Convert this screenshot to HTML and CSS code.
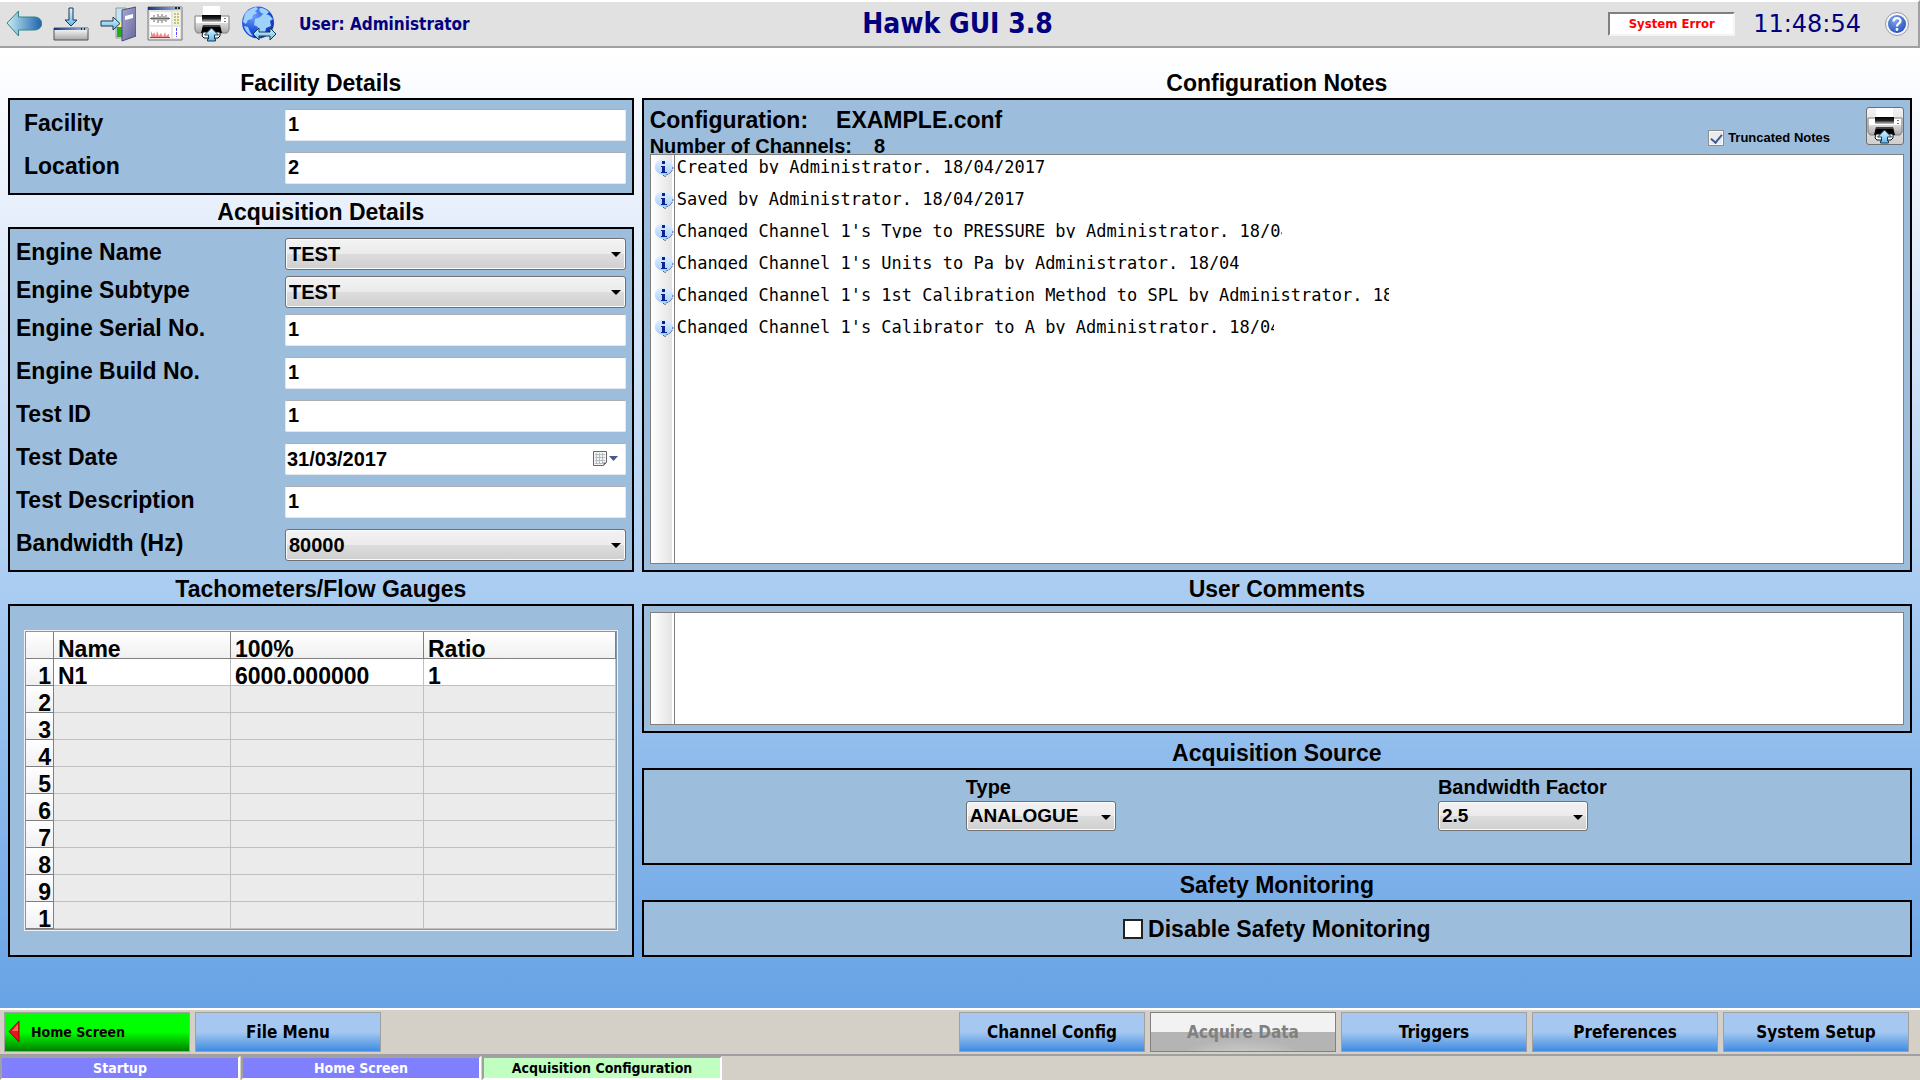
FILE: index.html
```html
<!DOCTYPE html>
<html lang="en">
<head>
    <meta charset="UTF-8">
    <meta name="viewport" content="width=device-width, initial-scale=1.0">
    <title>Hawk GUI 3.8</title>
    <link rel="stylesheet" href="styles.css">
</head>
<body>
    <!-- shared gradients and icons -->
    <svg class="defs" width="0" height="0" aria-hidden="true">
        <defs>
            <linearGradient id="blueArrow" x1="0" y1="0" x2="1" y2="0">
                <stop offset="0" stop-color="#c8ecf4"/><stop offset="1" stop-color="#1c62ae"/>
            </linearGradient>
            <linearGradient id="skyArrow" x1="0" y1="0" x2="0" y2="1">
                <stop offset="0" stop-color="#dff5ff"/><stop offset="1" stop-color="#5fb9ee"/>
            </linearGradient>
            <linearGradient id="metal" x1="0" y1="0" x2="0" y2="1">
                <stop offset="0" stop-color="#ffffff"/><stop offset="1" stop-color="#a8a8a8"/>
            </linearGradient>
            <linearGradient id="slot" x1="0" y1="0" x2="0" y2="1">
                <stop offset="0" stop-color="#000000"/><stop offset="0.5" stop-color="#222222"/><stop offset="1" stop-color="#cccccc"/>
            </linearGradient>
            <linearGradient id="titleBar" x1="0" y1="0" x2="1" y2="0">
                <stop offset="0" stop-color="#16357c"/><stop offset="1" stop-color="#a9c3e6"/>
            </linearGradient>
            <linearGradient id="door" x1="0" y1="0" x2="1" y2="1">
                <stop offset="0" stop-color="#a9a9d4"/><stop offset="1" stop-color="#66669c"/>
            </linearGradient>
            <radialGradient id="ocean" cx="0.35" cy="0.3" r="0.8">
                <stop offset="0" stop-color="#6fa0ff"/><stop offset="0.6" stop-color="#1c4fe0"/><stop offset="1" stop-color="#0a2aa0"/>
            </radialGradient>
            <radialGradient id="helpBall" cx="0.4" cy="0.3" r="0.8">
                <stop offset="0" stop-color="#7fa8f0"/><stop offset="1" stop-color="#1f48b4"/>
            </radialGradient>
            <linearGradient id="bubble" x1="0" y1="0" x2="0" y2="1">
                <stop offset="0" stop-color="#e4f0ff"/><stop offset="1" stop-color="#a0caf8"/>
            </linearGradient>
            <symbol id="printer" viewBox="0 0 36 36">
                <path d="M1 10h34v14l-2 3H3l-2-3z" fill="url(#metal)" stroke="#808080"/>
                <path d="M2 11h32v6H2z" fill="#fff"/>
                <path d="M9 0h17v10H9z" fill="#fff"/>
                <path d="M8 9h19v7H8z" fill="url(#slot)"/>
                <path d="M9 19h17l2 8H7z" fill="#000"/>
                <path d="M9 19h17v2H9z" fill="#444"/>
                <path d="M9 26h17v4l-2 2H10l-2-2z" fill="#fff" stroke="#111"/>
                <path d="M30 12h2v1h-2zM30 15h2v1h-2z" fill="#777"/>
                <path d="M17.500 22l7 7h-4v4h1v2h-8v-2h1v-4h-4z" fill="url(#skyArrow)" stroke="#1c3850"/>
            </symbol>
            <symbol id="info" viewBox="0 0 20 20">
                <path d="M10 1c5 0 9 3 9 8 0 4-3 7-7 8l-2 2-1-2c-5-1-8-4-8-8 0-5 4-8 9-8z" fill="url(#bubble)"/>
                <path d="M19 9c0 4-3 7-7 8l-1 2-2-2" fill="none" stroke="#48689c" stroke-dasharray="2 1"/>
                <path d="M8 3h3v3H8zM7 8h4v6h2v1H7v-1h1V9H7z" fill="#0c2492"/>
            </symbol>
        </defs>
    </svg>

    <header class="topbar">
        <div class="tools">
            <button type="button" class="tool" aria-label="Back">
                <svg width="36" height="36" viewBox="0 0 36 36">
                    <path d="M1 17L12.500 5v6H29c9 1 9 12 0 13H12.500v6z" fill="url(#blueArrow)" stroke="#2a8a80"/>
                </svg>
            </button>
            <button type="button" class="tool" aria-label="Minimise">
                <svg width="36" height="36" viewBox="0 0 36 36">
                    <path d="M16 2h4v12h4l-6 6-6-6h4z" fill="url(#skyArrow)" stroke="#1c3850"/>
                    <path d="M1 22h34v12H1z" fill="url(#metal)" stroke="#555"/>
                    <path d="M1 22h34v2H1z" fill="url(#titleBar)"/>
                    <path d="M28 22h1v2h-1zM31 22h1v2h-1z" fill="#123"/>
                </svg>
            </button>
            <button type="button" class="tool" aria-label="Log in">
                <svg width="36" height="36" viewBox="0 0 36 36">
                    <path d="M16 2h10v30H16z" fill="#bfe6fb" stroke="#9a9a8a"/>
                    <path d="M17 16h6v5h-6z" fill="#fff79c"/>
                    <path d="M17 21h6v10h-6z" fill="#28a81c"/>
                    <path d="M22 4L36 1v29l-14 5z" fill="url(#door)" stroke="#4c4c80"/>
                    <path d="M25 10l8-2v4l-8 2z" fill="#fff"/>
                    <path d="M1 15h12v-4l7 6.500-7 6.500v-4H1z" fill="url(#skyArrow)" stroke="#1c3850"/>
                </svg>
            </button>
            <button type="button" class="tool" aria-label="Data view">
                <svg width="36" height="36" viewBox="0 0 36 36">
                    <path d="M1 1h34v33H1z" fill="#e4e4e4" stroke="#777"/>
                    <path d="M1 1h34v3H1z" fill="url(#titleBar)"/>
                    <path d="M28 1h2v2h-2zM31 1h2v2h-2z" fill="#123"/>
                    <path d="M3 6h21v13H3zM3 21h21v11H3zM26 21h7v11h-7z" fill="#fff"/>
                    <path d="M26 6h7v13h-7z" fill="#f8f6cc"/>
                    <path d="M3 12.500h20M5 11v3M7 9v7M9 11v3M11 8v9M13 10v5M15 8v9M17 10v5M19 9v7M21 11v3" stroke="#666"/>
                    <path d="M4 31v-6l2 4 1-3 2 4 1-5 2 5 2-3 2 4 2-5 1 4 3-2v3z" fill="#e88"/>
                    <path d="M3 31.500h20" stroke="#b33"/>
                    <path d="M27 8h5M27 11h5M27 14h5M27 17h5" stroke="#8c8c50" stroke-dasharray="2 1"/>
                    <path d="M29.500 22v9" stroke="#5a4cff" stroke-dasharray="3 1"/>
                </svg>
            </button>
            <button type="button" class="tool" aria-label="Print">
                <svg width="36" height="36"><use href="#printer"/></svg>
            </button>
            <button type="button" class="tool" aria-label="Network">
                <svg width="36" height="36" viewBox="0 0 36 36">
                    <circle cx="17" cy="16.500" r="16" fill="url(#ocean)"/>
                    <path d="M4 8c3-4 7-6 11-7l2 2-3 2 2 2-4 2-1 4-4 1-2 4-3-2zM19 2c4 0 7 2 9 4l-3 3-5-2-2-3zM14 13l5-2 3-3 6 1 4 4-3 2 1 5-5 2-1 5-5 4-3-6 1-4-4-2zM3 20l4 1 2 5 3 4-3-1c-3-2-5-5-6-9z" fill="#9fd2fa"/>
                    <path d="M12 28l6-6v4h11v-4l6 6-6 6v-4H18v4z" fill="url(#skyArrow)" stroke="#1c3850"/>
                </svg>
            </button>
            <span class="user">User: Administrator</span>
        </div>
        <h1 class="app-title">Hawk GUI 3.8</h1>
        <div class="status">
            <output class="error-box">System Error</output>
            <time class="clock">11:48:54</time>
            <button type="button" class="help" aria-label="Help">
                <svg width="24" height="24" viewBox="0 0 24 24">
                    <circle cx="12" cy="12" r="11.500" fill="#f4f4f8" stroke="#9a9aa8"/>
                    <circle cx="12" cy="12" r="9" fill="url(#helpBall)"/>
                    <path d="M8.500 9.500c0-4.500 7-4.500 7-.5 0 2.500-3.500 2.500-3.500 5.500" fill="none" stroke="#fff" stroke-width="2.200"/>
                    <circle cx="12" cy="17.500" r="1.400" fill="#fff"/>
                </svg>
            </button>
        </div>
    </header>

    <main class="main">
        <div class="column">
            <h2 class="title">Facility Details</h2>
            <section class="panel fields fields-indent">
                <div class="field">
                    <label for="facility">Facility</label>
                    <input type="text" id="facility" class="textbox" value="1">
                </div>
                <div class="field">
                    <label for="location">Location</label>
                    <input type="text" id="location" class="textbox" value="2">
                </div>
            </section>

            <h2 class="title">Acquisition Details</h2>
            <section class="panel fields">
                <div class="field field-tight">
                    <label for="engineName">Engine Name</label>
                    <div class="combo"><select id="engineName"><option>TEST</option></select></div>
                </div>
                <div class="field field-tight">
                    <label for="engineSubtype">Engine Subtype</label>
                    <div class="combo"><select id="engineSubtype"><option>TEST</option></select></div>
                </div>
                <div class="field">
                    <label for="serialNo">Engine Serial No.</label>
                    <input type="text" id="serialNo" class="textbox" value="1">
                </div>
                <div class="field">
                    <label for="buildNo">Engine Build No.</label>
                    <input type="text" id="buildNo" class="textbox" value="1">
                </div>
                <div class="field">
                    <label for="testId">Test ID</label>
                    <input type="text" id="testId" class="textbox" value="1">
                </div>
                <div class="field">
                    <label for="testDate">Test Date</label>
                    <div class="textbox datebox">
                        <input type="text" id="testDate" value="31/03/2017">
                        <button type="button" class="calendar" aria-label="Choose date">
                            <svg width="28" height="18" viewBox="0 0 28 18">
                                <path d="M1.500 1.500h13v11l-3 3h-10z" fill="#f4f4f4" stroke="#6c6468"/>
                                <path d="M3 4.500h10M3 7.500h10M3 10.500h10M3 13.500h7M4.500 3v11M7.500 3v11M10.500 3v11" stroke="#b4bcc4"/>
                                <path d="M11.500 15.500v-3h3z" fill="#6c6468"/>
                                <path d="M17 6h9l-4.500 5z" fill="#44598c"/>
                            </svg>
                        </button>
                    </div>
                </div>
                <div class="field">
                    <label for="testDesc">Test Description</label>
                    <input type="text" id="testDesc" class="textbox" value="1">
                </div>
                <div class="field">
                    <label for="bandwidth">Bandwidth (Hz)</label>
                    <div class="combo"><select id="bandwidth"><option>80000</option></select></div>
                </div>
            </section>

            <h2 class="title">Tachometers/Flow Gauges</h2>
            <section class="panel gauges">
                <table class="grid">
                    <colgroup><col class="col-no"><col class="col-name"><col class="col-full"><col></colgroup>
                    <thead>
                        <tr><th></th><th>Name</th><th>100%</th><th>Ratio</th></tr>
                    </thead>
                    <tbody>
                        <tr class="filled"><th>1</th><td>N1</td><td>6000.000000</td><td>1</td></tr>
                        <tr><th>2</th><td></td><td></td><td></td></tr>
                        <tr><th>3</th><td></td><td></td><td></td></tr>
                        <tr><th>4</th><td></td><td></td><td></td></tr>
                        <tr><th>5</th><td></td><td></td><td></td></tr>
                        <tr><th>6</th><td></td><td></td><td></td></tr>
                        <tr><th>7</th><td></td><td></td><td></td></tr>
                        <tr><th>8</th><td></td><td></td><td></td></tr>
                        <tr><th>9</th><td></td><td></td><td></td></tr>
                        <tr><th>1</th><td></td><td></td><td></td></tr>
                    </tbody>
                </table>
            </section>
        </div>

        <div class="column">
            <h2 class="title">Configuration Notes</h2>
            <section class="panel notes-panel">
                <div class="notes-head">
                    <div class="notes-info">
                        <div class="config-name"><span>Configuration:</span><span>EXAMPLE.conf</span></div>
                        <div class="channel-count"><span>Number of Channels:</span><span>8</span></div>
                    </div>
                    <label class="truncate"><input type="checkbox" class="check check-small" checked>Truncated Notes</label>
                    <button type="button" class="print-notes" aria-label="Print notes">
                        <svg width="36" height="36"><use href="#printer"/></svg>
                    </button>
                </div>
                <ul class="notes">
                    <li><svg width="20" height="20"><use href="#info"/></svg><span>Created by Administrator. 18/04/2017</span></li>
                    <li><svg width="20" height="20"><use href="#info"/></svg><span>Saved by Administrator. 18/04/2017</span></li>
                    <li><svg width="20" height="20"><use href="#info"/></svg><span class="cut-type">Changed Channel 1's Type to PRESSURE by Administrator. 18/04</span></li>
                    <li><svg width="20" height="20"><use href="#info"/></svg><span>Changed Channel 1's Units to Pa by Administrator. 18/04</span></li>
                    <li><svg width="20" height="20"><use href="#info"/></svg><span class="cut-method">Changed Channel 1's 1st Calibration Method to SPL by Administrator. 18</span></li>
                    <li><svg width="20" height="20"><use href="#info"/></svg><span class="cut-calibrator">Changed Channel 1's Calibrator to A by Administrator. 18/04</span></li>
                </ul>
            </section>

            <h2 class="title">User Comments</h2>
            <section class="panel comments-panel">
                <textarea class="comments" aria-label="User Comments"></textarea>
            </section>

            <h2 class="title title-wide">Acquisition Source</h2>
            <section class="panel source">
                <div class="source-item">
                    <label for="sourceType">Type</label>
                    <div class="combo combo-small"><select id="sourceType"><option>ANALOGUE</option></select></div>
                </div>
                <div class="source-item">
                    <label for="factor">Bandwidth Factor</label>
                    <div class="combo combo-small"><select id="factor"><option>2.5</option></select></div>
                </div>
            </section>

            <h2 class="title title-wide">Safety Monitoring</h2>
            <section class="panel safety">
                <label><input type="checkbox" class="check">Disable Safety Monitoring</label>
            </section>
        </div>
    </main>

    <footer class="footer">
        <div class="actions">
            <button type="button" class="action action-home">
                <svg width="12" height="24" viewBox="0 0 12 24"><path d="M11 1v21L1 11.500z" fill="#f01018" stroke="#7c0c0c"/><path d="M10 4v7H4z" fill="#ff6a5c"/></svg>
                Home Screen
            </button>
            <button type="button" class="action">File Menu</button>
            <button type="button" class="action action-right">Channel Config</button>
            <button type="button" class="action" disabled>Acquire Data</button>
            <button type="button" class="action">Triggers</button>
            <button type="button" class="action">Preferences</button>
            <button type="button" class="action">System Setup</button>
        </div>
        <nav class="tabs">
            <a href="#startup">Startup</a>
            <a href="#home">Home Screen</a>
            <a href="#acquisition" class="active">Acquisition Configuration</a>
        </nav>
    </footer>
</body>
</html>
```

FILE: styles.css
```css
* {
    box-sizing: border-box;
}

body {
    margin: 0;
    min-height: 100vh;
    display: flex;
    flex-direction: column;
    font-family: "Liberation Sans", Arial, sans-serif;
    font-weight: bold;
    color: #000;
    background: linear-gradient(#ffffff 5%, #e6effb 20%, #abcdf2 54%, #66a2e5 94%);
}

button, input, select, textarea {
    font: inherit;
    color: inherit;
}

button {
    cursor: pointer;
}

svg {
    display: block;
}

.defs {
    position: absolute;
}

/* Top bar */
.topbar {
    display: grid;
    grid-template-columns: 1fr auto 1fr;
    align-items: center;
    height: 48px;
    padding: 0 9px 0 6px;
    background-color: #e1e1e1;
    border-top: 2px solid #fff;
    border-right: 2px solid #a0a0a0;
    border-bottom: 2px solid #a0a0a0;
    font-family: "DejaVu Sans Condensed", "DejaVu Sans", sans-serif;
    color: #000080;
}

.tools {
    display: flex;
    align-items: center;
    gap: 11px;
}

.tool, .help {
    padding: 0;
    border: none;
    background: none;
}

.user {
    margin-left: 11px;
    font-size: 17px;
}

.app-title {
    margin: 0;
    font-size: 28px;
    line-height: 32px;
}

.status {
    display: flex;
    align-items: center;
    justify-content: flex-end;
}

.error-box {
    width: 127px;
    margin-right: 18px;
    border: 2px solid #808080;
    border-right-color: #f4f4f4;
    border-bottom-color: #f4f4f4;
    background-color: #fff;
    color: #f00;
    font-size: 13px;
    line-height: 20px;
    text-align: center;
}

.clock {
    margin-right: 24px;
    font-family: "DejaVu Sans", sans-serif;
    font-size: 24px;
    line-height: 32px;
    font-weight: normal;
}

/* Page columns */
.main {
    flex: 1;
    display: grid;
    grid-template-columns: 33fr 67fr;
    align-items: start;
    gap: 8px;
    padding: 18px 8px 24px 8px;
}

.column {
    min-width: 0;
}

.title {
    margin: 0;
    padding-top: 2px;
    font-size: 23px;
    line-height: 30px;
    text-align: center;
}

.title-wide {
    padding-top: 5px;
}

.panel {
    border: 2px solid #000;
    background-color: #9dbddd;
}

/* Form fields */
.fields {
    padding: 9px 6px 9px 6px;
}

.field {
    display: flex;
    font-size: 20px;
}

.field + .field {
    margin-top: 11px;
}

.field-tight + .field {
    margin-top: 6px;
}

.field label {
    width: 269px;
    flex: none;
    font-size: 23px;
    line-height: 28px;
}

.fields-indent label {
    padding-left: 8px;
}

.textbox {
    flex: 1;
    min-width: 0;
    height: 32px;
    padding: 0 2px 2px;
    border: 1px solid #e3e9ef;
    border-top-color: #abadb3;
    border-radius: 2px;
    background-color: #fff;
}

.datebox {
    display: flex;
    align-items: center;
    padding: 0 5px 0 1px;
}

.datebox input {
    flex: 1;
    min-width: 0;
    padding: 0;
    border: none;
    background: none;
}

.calendar {
    padding: 0;
    border: none;
    background: none;
}

.combo {
    position: relative;
    flex: 1;
}

.combo::after {
    content: "";
    position: absolute;
    top: 14px;
    right: 5px;
    border: 5px solid transparent;
    border-top-color: #000;
    border-bottom: none;
    pointer-events: none;
}

.combo select {
    appearance: none;
    width: 100%;
    height: 32px;
    padding: 0 3px;
    border: 1px solid #707070;
    border-radius: 3px;
    background: linear-gradient(#f2f2f2, #ebebeb 50%, #dddddd 50%, #cfcfcf);
    box-shadow: inset 0 0 0 1px #fcfcfc;
}

.combo-small select {
    height: 30px;
    font-size: 19px;
}

/* Gauge table */
.gauges {
    padding: 24px 15px;
}

.grid {
    width: 100%;
    table-layout: fixed;
    border-collapse: separate;
    border-spacing: 0;
    border: 1px solid #8296b0;
    outline: 1px solid #eef2f8;
    margin: 1px 0;
    font-size: 23px;
    line-height: 18px;
}

.col-no {
    width: 28px;
}

.col-name {
    width: 177px;
}

.col-full {
    width: 193px;
}

.grid th, .grid td {
    height: 27px;
    padding: 8px 4px 0;
    text-align: left;
    border-right: 1px solid #c0c0c0;
    border-bottom: 1px solid #c0c0c0;
    background-color: #ebebeb;
}

.grid th {
    border-color: #808080;
    background: linear-gradient(#fff, #f0f0f0);
}

.grid tbody th {
    padding-right: 2px;
    text-align: right;
}

.grid .filled td {
    background-color: #fff;
}

/* Notes */
.notes-panel {
    display: flex;
    flex-direction: column;
    height: 474px;
    padding: 0 6px 6px;
}

.notes-head {
    display: flex;
    height: 54px;
}

.notes-info {
    flex: 1;
    padding-top: 8px;
}

.config-name, .channel-count {
    display: flex;
}

.config-name {
    gap: 28px;
    font-size: 23px;
    line-height: 24px;
}

.channel-count {
    gap: 22px;
    font-size: 20px;
    line-height: 28px;
}

.truncate {
    display: flex;
    align-items: center;
    align-self: flex-end;
    gap: 4px;
    margin: 0 36px 8px 0;
    font-size: 13px;
    line-height: 16px;
}

.print-notes {
    width: 38px;
    height: 38px;
    margin-top: 7px;
    padding: 0;
    border: 1px solid #707070;
    border-radius: 3px;
    background: linear-gradient(#f2f2f2, #cfcfcf);
}

.check {
    appearance: none;
    width: 20px;
    height: 20px;
    margin: 0;
    border: 2px solid #222;
    background-color: #fff;
}

.check-small {
    width: 16px;
    height: 16px;
    border: 1px solid #8e8f8f;
    background-color: #e8ecf0;
    box-shadow: inset 0 0 0 1px #f8f8f8;
}

.check-small:checked::after {
    content: "";
    display: block;
    width: 5px;
    height: 9px;
    margin: 1px auto;
    border: solid #40588c;
    border-width: 0 2px 2px 0;
    transform: rotate(40deg);
}

.notes, .comments {
    border: 1px solid #808080;
    background: linear-gradient(90deg, #fff, #e4e4e4 21px, #fff 21px, #fff 23px, #808080 23px, #808080 24px, #fff 24px);
}

.notes {
    flex: 1;
    margin: 0;
    padding: 3px 3px;
    list-style: none;
    font-family: "DejaVu Sans Mono", "Liberation Mono", monospace;
    font-size: 17px;
    font-weight: normal;
}

.notes li {
    display: flex;
    align-items: flex-start;
    gap: 3px;
    height: 32px;
}

/* rows cut the text just under the baseline */
.notes span {
    height: 16px;
    line-height: 18px;
    white-space: nowrap;
    overflow: hidden;
}

.cut-type {
    width: 605px;
}

.cut-method {
    width: 712px;
}

.cut-calibrator {
    width: 597px;
}

/* Comments */
.comments-panel {
    padding: 6px;
}

.comments {
    display: block;
    width: 100%;
    height: 113px;
    padding: 2px 4px 2px 28px;
    resize: none;
}

/* Acquisition source */
.source {
    display: flex;
    justify-content: space-evenly;
    padding: 5px 0 32px;
    font-size: 20px;
    line-height: 24px;
}

.source-item {
    width: 150px;
    white-space: nowrap;
}

.source-item .combo {
    margin-top: 2px;
}

.safety {
    display: flex;
    justify-content: center;
    padding: 11px 0 10px;
    font-size: 23px;
    line-height: 32px;
}

.safety label {
    display: flex;
    align-items: center;
    gap: 5px;
}

/* Footer */
.footer {
    border-top: 2px solid #fff;
    background-color: #d4d0c8;
    font-family: "DejaVu Sans Condensed", "DejaVu Sans", sans-serif;
}

.actions {
    display: flex;
    gap: 5px;
    padding: 2px 11px 2px 4px;
    border-bottom: 2px solid #a0a0a0;
}

.action {
    flex: 0 1 186px;
    height: 40px;
    padding: 0 3px;
    border: 1px solid #a0a0a0;
    background: linear-gradient(#a6c8f0 50%, #3f8be2);
    font-size: 17px;
}

.action-home {
    display: flex;
    align-items: center;
    gap: 11px;
    background: linear-gradient(#00ff00 50%, #008000);
    font-size: 14px;
}

.action-right {
    margin-left: auto;
}

.action:disabled {
    border-color: #808080;
    background:
        radial-gradient(ellipse at 50% 100%, #e4e4e4, rgba(180, 180, 180, 0) 60%) 0 20px no-repeat,
        linear-gradient(#f2f2f2 50%, #b4b4b4 50%);
    color: #808080;
}

.tabs {
    display: flex;
    gap: 1px;
    height: 24px;
}

.tabs a {
    flex: 0 1 240px;
    border: 2px solid #a0a0a0;
    border-right-color: #fff;
    border-bottom-color: #fff;
    background-color: #8080ff;
    color: #fff;
    font-size: 14px;
    line-height: 20px;
    text-align: center;
    text-decoration: none;
}

.tabs .active {
    background-color: #c0ffc0;
    color: #000;
}
```
